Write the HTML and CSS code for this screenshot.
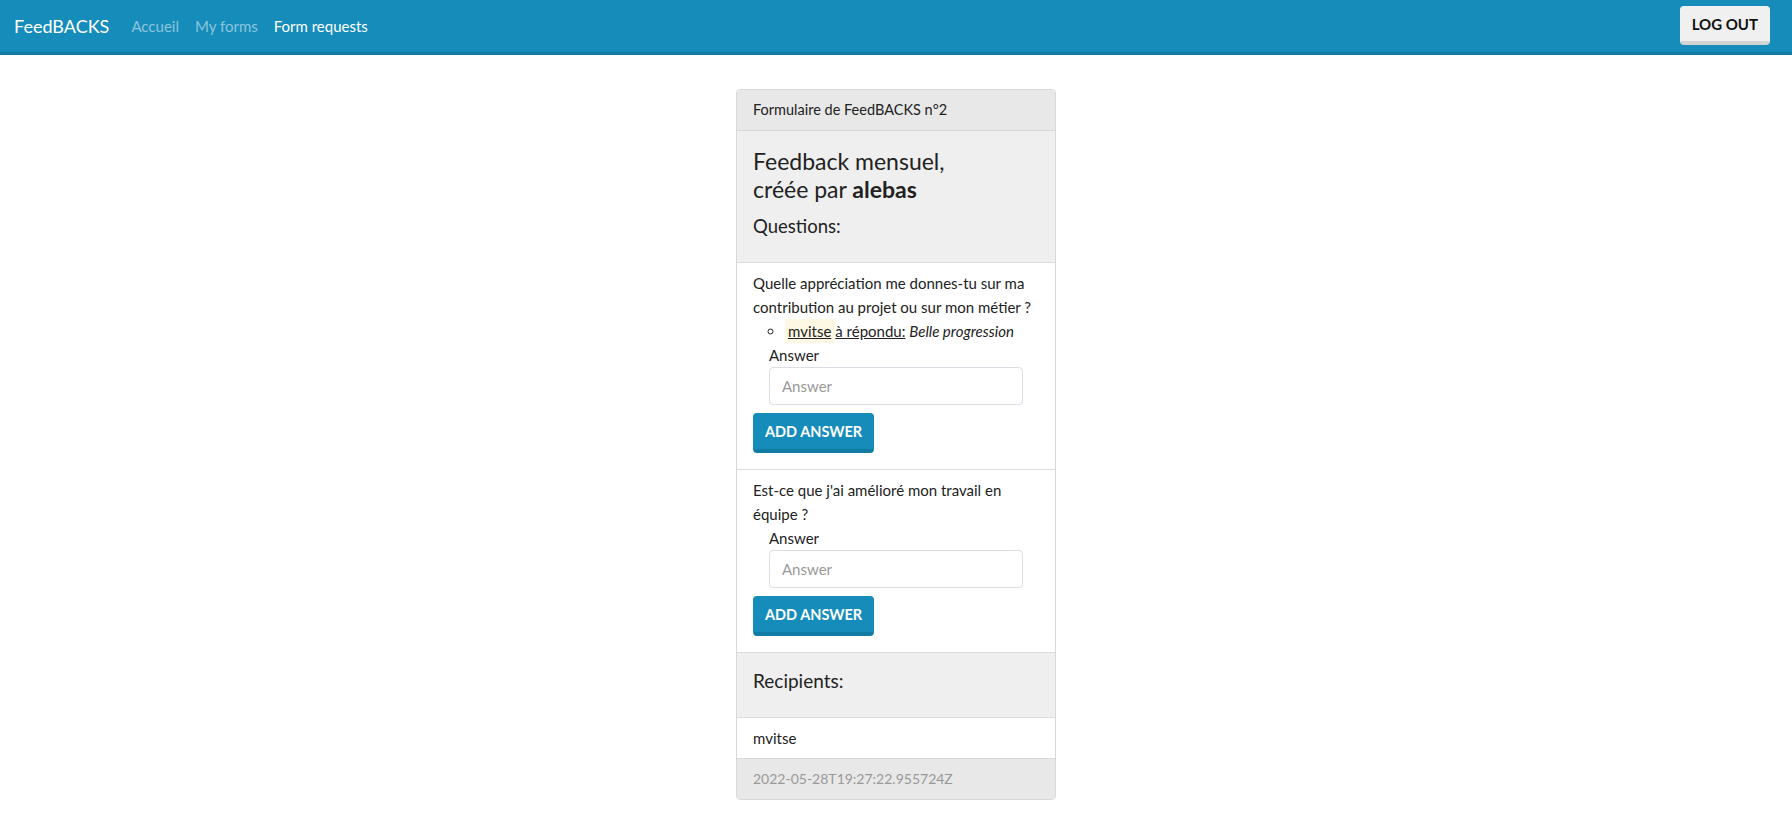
FILE: index.html
```html
<!DOCTYPE html>
<html lang="fr">
<head>
<meta charset="utf-8">
<title>FeedBACKS</title>
<link rel="stylesheet" href="styles.css">
</head>
<body>
<nav class="navbar">
  <a class="brand" href="#">FeedBACKS</a>
  <ul class="nav-links">
    <li><a class="nav-link" href="#">Accueil</a></li>
    <li><a class="nav-link" href="#">My forms</a></li>
    <li><a class="nav-link active" href="#">Form requests</a></li>
  </ul>
  <button class="btn btn-light" type="button">Log out</button>
</nav>
<main class="page">
  <div class="card">
    <div class="card-header">Formulaire de FeedBACKS n°2</div>
    <div class="section section-muted">
      <h3 class="form-title">Feedback mensuel,<br>créée par <strong>alebas</strong></h3>
      <h4 class="section-title">Questions:</h4>
    </div>
    <div class="section question">
      <p class="question-text">Quelle appréciation me donnes-tu sur ma contribution au projet ou sur mon métier ?</p>
      <ul class="answers">
        <li><mark class="author"><u>mvitse</u></mark><u>à répondu:</u> <em>Belle progression</em></li>
      </ul>
      <form class="answer-form">
        <div class="form-group">
          <label class="form-label">Answer</label>
          <input class="form-control" type="text" placeholder="Answer">
        </div>
        <button class="btn btn-primary" type="button">Add answer</button>
      </form>
    </div>
    <div class="section question">
      <p class="question-text">Est-ce que j'ai amélioré mon travail en équipe ?</p>
      <form class="answer-form">
        <div class="form-group">
          <label class="form-label">Answer</label>
          <input class="form-control" type="text" placeholder="Answer">
        </div>
        <button class="btn btn-primary" type="button">Add answer</button>
      </form>
    </div>
    <div class="section section-muted">
      <h4 class="section-title recipients-title">Recipients:</h4>
    </div>
    <div class="section recipient">mvitse</div>
    <div class="card-footer">2022-05-28T19:27:22.955724Z</div>
  </div>
</main>
</body>
</html>
```

FILE: styles.css
```css
* { box-sizing: border-box; }

html, body {
  margin: 0;
  padding: 0;
  background: #ffffff;
  font-family: Lato, "Liberation Sans", sans-serif;
  font-size: 15px;
  color: #222222;
}

.navbar {
  display: flex;
  align-items: center;
  height: 55px;
  padding: 0 22px 0 14px;
  background: #158cba;
  border-bottom: 3px solid #127ba3;
}

.brand {
  font-size: 18px;
  color: #ffffff;
  text-decoration: none;
  margin-right: 22px;
}

.nav-links {
  display: flex;
  gap: 16px;
  list-style: none;
  margin: 0;
  padding: 0;
  flex: 1;
}

.nav-link {
  font-size: 15px;
  color: rgba(255, 255, 255, 0.5);
  text-decoration: none;
}

.nav-link.active { color: #ffffff; }

.btn {
  font-family: inherit;
  font-weight: 700;
  text-transform: uppercase;
  border-radius: 4px;
  border: 1px solid transparent;
  border-bottom-width: 4px;
  cursor: pointer;
}

.btn-light {
  height: 39px;
  padding: 0 11px;
  font-size: 15px;
  color: #111111;
  background: #f0f0f0;
  border-color: #f0f0f0 #f0f0f0 #d4d4d4;
  margin-top: -2px;
}

.btn-primary {
  height: 40px;
  padding: 0 11px;
  font-size: 14.5px;
  color: #ffffff;
  background: #158cba;
  border-color: #158cba #158cba #127ba3;
}

.page {
  display: flex;
  justify-content: center;
  padding-top: 34px;
}

.card {
  width: 320px;
  border: 1px solid #d8d8d8;
  border-radius: 4px;
  overflow: hidden;
}

.card-header,
.card-footer {
  background: #e8e8e8;
  padding: 8px 16px;
  line-height: 24px;
  font-size: 14.5px;
}

.card-header { border-bottom: 1px solid #d8d8d8; }

.card-footer {
  color: #999999;
  font-size: 14px;
  border-top: 1px solid #d8d8d8;
}

.section {
  padding: 8px 16px 16px;
  border-bottom: 1px solid #dcdcdc;
}

.section-muted {
  background: #efefef;
  padding: 16px 16px 16px;
}

.form-title {
  margin: 0 0 11px;
  font-size: 23px;
  line-height: 28px;
  font-weight: 400;
}

.form-title strong { font-weight: 700; }

.section-title {
  margin: 0 0 8px;
  font-size: 18.5px;
  line-height: 24px;
  font-weight: 400;
}

.recipients-title { font-size: 19px; }

.question-text {
  margin: 0;
  line-height: 24px;
}

.answers {
  list-style: circle;
  margin: 0;
  padding-left: 32px;
  line-height: 24px;
}

.author {
  background: #fcf8e3;
  color: inherit;
  padding: 3px 4px 3px 3px;
}

.answer-form {
  display: flex;
  flex-direction: column;
  align-items: flex-start;
  gap: 8px;
}

.form-group {
  display: flex;
  flex-direction: column;
  align-self: stretch;
  margin: 0 16px;
}

.form-label { line-height: 24px; }

.form-control {
  height: 38px;
  padding: 0 12px;
  font-family: inherit;
  font-size: 15px;
  color: #222222;
  border: 1px solid #dbdee4;
  border-radius: 4px;
}

.form-control::placeholder { color: #999999; }

.recipient {
  padding: 8px 16px;
  line-height: 24px;
  border-bottom: none;
}
```
